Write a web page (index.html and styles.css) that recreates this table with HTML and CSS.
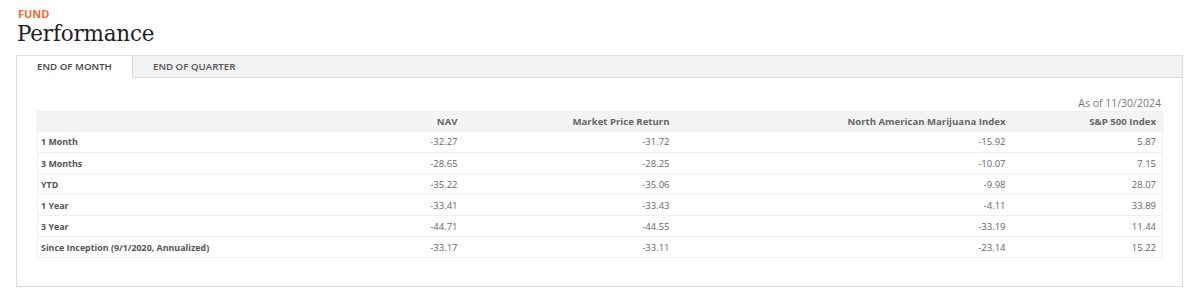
FILE: index.html
```html
<!DOCTYPE html>
<html lang="en">
<head>
<meta charset="utf-8">
<title>Fund Performance</title>
<link rel="stylesheet" href="styles.css">
</head>
<body>
<div class="page">
  <div class="eyebrow">FUND</div>
  <h1 class="title">Performance</h1>
  <div class="panel">
    <div class="tabs">
      <div class="tab tab-active">END OF MONTH</div>
      <div class="tab">END OF QUARTER</div>
    </div>
    <div class="panel-body">
      <div class="asof">As of 11/30/2024</div>
      <table class="perf">
        <colgroup>
          <col class="c1"><col class="c2"><col class="c3"><col class="c4"><col class="c5">
        </colgroup>
        <thead>
          <tr><th class="lbl"></th><th>NAV</th><th>Market Price Return</th><th>North American Marijuana Index</th><th>S&amp;P 500 Index</th></tr>
        </thead>
        <tbody>
          <tr><td class="lbl">1 Month</td><td>-32.27</td><td>-31.72</td><td>-15.92</td><td>5.87</td></tr>
          <tr><td class="lbl">3 Months</td><td>-28.65</td><td>-28.25</td><td>-10.07</td><td>7.15</td></tr>
          <tr><td class="lbl">YTD</td><td>-35.22</td><td>-35.06</td><td>-9.98</td><td>28.07</td></tr>
          <tr><td class="lbl">1 Year</td><td>-33.41</td><td>-33.43</td><td>-4.11</td><td>33.89</td></tr>
          <tr><td class="lbl">3 Year</td><td>-44.71</td><td>-44.55</td><td>-33.19</td><td>11.44</td></tr>
          <tr><td class="lbl">Since Inception (9/1/2020, Annualized)</td><td>-33.17</td><td>-33.11</td><td>-23.14</td><td>15.22</td></tr>
        </tbody>
      </table>
    </div>
  </div>
</div>
</body>
</html>
```
FILE: styles.css
```css
* { box-sizing: border-box; }
html, body { margin: 0; padding: 0; background: #fff; }
body { font-family: "Open Sans", "Liberation Sans", sans-serif; color: #555; }

.page { padding: 7px 17px 0 16px; }

.eyebrow {
  font-size: 11px;
  font-weight: 700;
  color: #f26b2a;
  line-height: 13px;
  padding-left: 2px;
}

.title {
  margin: 0;
  font-family: "DejaVu Serif", serif;
  font-weight: 400;
  font-size: 21.5px;
  line-height: 27px;
  color: #222;
  padding-left: 1px;
  letter-spacing: -0.2px;
}

.panel {
  margin-top: 8px;
  border: 1px solid #dcdcdc;
}

.tabs {
  display: flex;
  height: 22px;
  background: #f2f2f2;
  border-bottom: 1px solid #dcdcdc;
}

.tab {
  padding: 0 20px;
  font-size: 9.7px;
  font-weight: 600;
  color: #555;
  line-height: 21px;
}

.tab-active {
  width: 116px;
  padding: 0;
  text-align: center;
  background: #fff;
  border-right: 1px solid #dcdcdc;
  height: 22px;
  color: #444;
}

.panel-body { padding: 17px 20px 28px 20px; }

.asof {
  text-align: right;
  font-size: 10.5px;
  color: #777;
  line-height: 16px;
  padding-right: 1px;
}

.perf {
  width: 100%;
  border-collapse: collapse;
  border: 1px solid #efefef;
  font-size: 9.5px;
  table-layout: fixed;
}

.c1 { width: 223px; }
.c2 { width: 203px; }
.c3 { width: 212px; }
.c4 { width: 336px; }
.c5 { width: 151px; }

.perf th {
  background: #f4f4f4;
  height: 20px;
  text-align: right;
  font-weight: 700;
  color: #666;
  padding: 0 6px;
  font-size: 9.6px;
}

.perf td {
  height: 21px;
  text-align: right;
  padding: 0 6px;
  color: #666;
  border-top: 1px solid #eeeeee;
}

.perf tbody tr:first-child td { border-top: none; }

.perf .lbl {
  text-align: left;
  font-weight: 700;
  font-size: 8.9px;
  color: #555;
  padding-left: 3px;
  white-space: nowrap;
}
```
